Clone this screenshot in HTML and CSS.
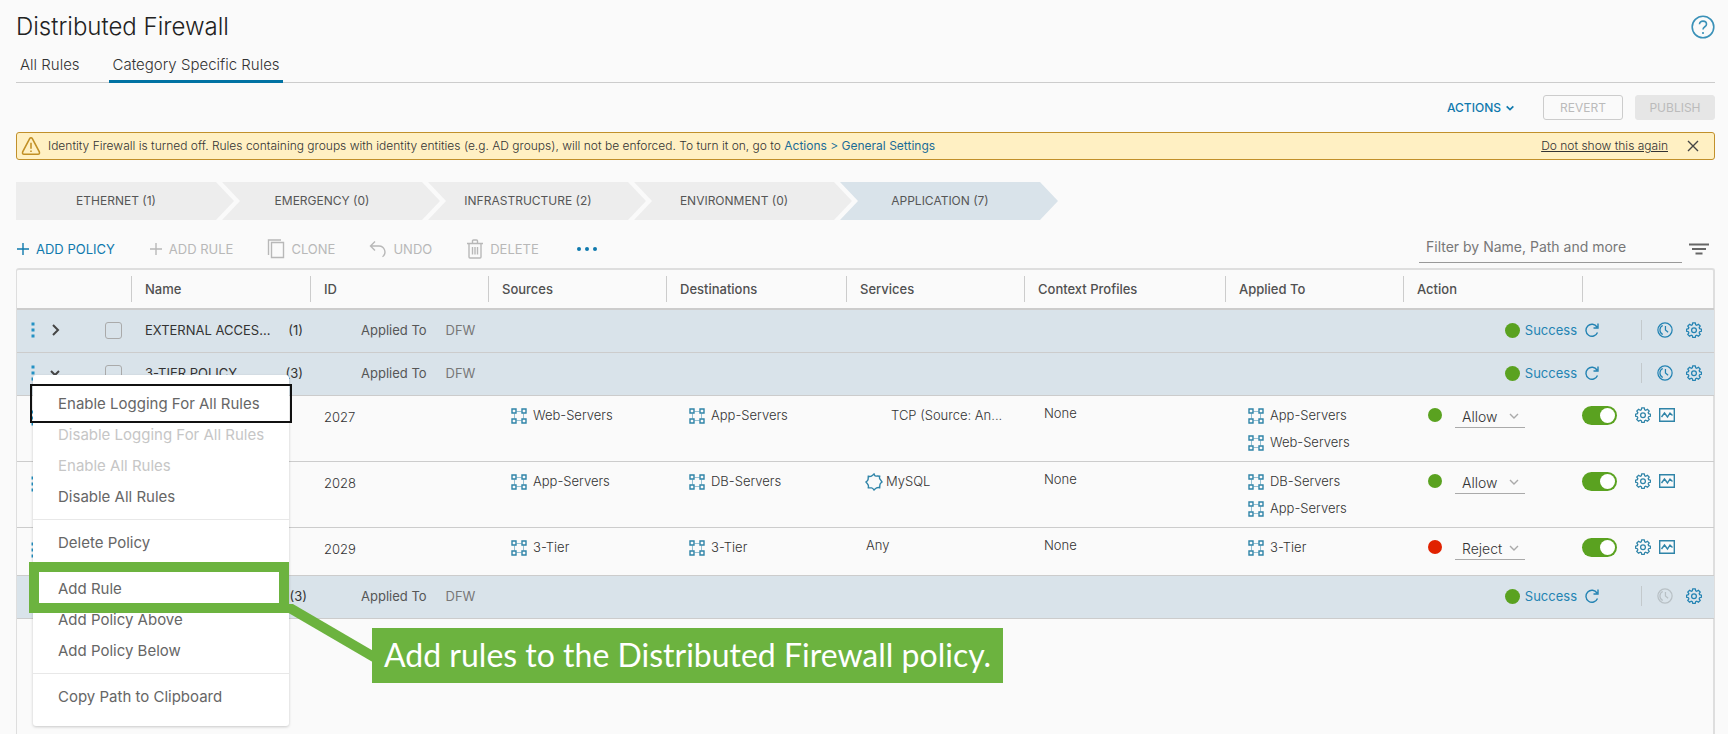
FILE: index.html
```html
<!DOCTYPE html>
<html lang="en">
<head>
<meta charset="utf-8">
<meta name="viewport" content="width=device-width, initial-scale=1">
<title>Distributed Firewall</title>
<link rel="stylesheet" href="styles.css">
</head>
<body>
<svg class="sprite" aria-hidden="true">
  <symbol id="plus" viewBox="0 0 14 14"><path d="M7 1v12M1 7h12"/></symbol>
  <symbol id="clone" viewBox="0 0 18 20"><path d="M4.5 3.5h12v15h-12z"/><path d="M1.5 16V1H14"/></symbol>
  <symbol id="undo" viewBox="0 0 18 18"><path d="M6 1.500L1.500 6 6 10.500M1.500 6H10a6 6 0 0 1 3.500 10.800"/></symbol>
  <symbol id="trash" viewBox="0 0 18 20"><path d="M1 4.500h16M3 4.500V18q0 1 1 1h10q1 0 1-1V4.500M6.500 4V2q0-1 1-1h3q1 0 1 1v2M6.500 8v7.500M9 8v7.500M11.500 8v7.500"/></symbol>
  <symbol id="down" viewBox="0 0 12 12"><path d="M2 4l4 4 4-4"/></symbol>
  <symbol id="right" viewBox="0 0 12 12"><path d="M4 1l5 5-5 5"/></symbol>
  <symbol id="close" viewBox="0 0 12 12"><path d="M1 1l10 10M11 1L1 11"/></symbol>
  <symbol id="kebab" viewBox="0 0 4 16"><path class="solid" d="M.5.500h3v3h-3zM.5 6.500h3v3h-3zM.5 12.500h3v3h-3z"/></symbol>
  <symbol id="group" viewBox="0 0 16 16"><path d="M1 1h4v4H1zM11 1h4v4h-4zM1 11h4v4H1zM11 11h4v4h-4z"/><path class="thin" d="M5.500 3.500h5M5.500 12.500h5M3.500 5.500v5M12.500 5.500v5"/></symbol>
  <symbol id="service" viewBox="0 0 18 18"><path d="M9 1q.8 2.400 2.200 2.100T14.700 3.300q-.5 1.900.2 2.700T17 9q-2 1.400-2.100 2.700t-.2 3q-1.900-.4-3.100.2T9 17q-1.200-2-2.400-2.100t-3.300-.2q.4-1.700-.2-2.800T1 9q2-1.400 2.100-2.600t.2-3.100q2 .4 3.100-.2T9 1z"/></symbol>
  <symbol id="refresh" viewBox="0 0 16 16"><path d="M13.500 10.500A6 6 0 1 1 13 5M14 1.500V6H9.500"/></symbol>
  <symbol id="clock" viewBox="0 0 18 18"><circle cx="9" cy="9" r="8"/><path d="M9.500 4.500V9l3 2.500M6.500 4a5.500 5.500 0 0 0 0 10"/></symbol>
  <symbol id="gear" viewBox="0 0 18 18"><path d="M7.600 1h2.800l.5 2.100 1.200.5 1.900-1.100 2 2-1.200 1.800.5 1.200 2.100.6v2.300l-2.100.5-.5 1.300 1.200 1.800-2 2-1.900-1.100-1.200.5-.5 2H7.600L7.100 15.400l-1.200-.5L4 16l-2-2 1.200-1.800-.5-1.300L.7 10.400V8.100l2-.6.5-1.200L2 4.500l2-2 1.900 1.100 1.200-.5z"/><circle cx="9" cy="9.200" r="2.700"/></symbol>
  <symbol id="chart" viewBox="0 0 16 14"><path d="M.7.700h14.600v12.600H.7zM2.500 9l3-4 3 4 2.500-4 2.500 2.500"/></symbol>
</svg>

<div class="page">
  <header class="head">
    <h1>Distributed Firewall</h1>
    <button class="icon-btn" aria-label="Help"><svg class="help" viewBox="0 0 24 24"><circle cx="12" cy="12" r="10.800"/><path d="M8.500 9.200c0-4.200 7-4 7 0 0 2.600-3.500 2.500-3.500 5.300M12 17v2"/></svg></button>
  </header>
  <nav class="tabs">
    <a class="tab" href="#all">All Rules</a>
    <a class="tab active" href="#category">Category Specific Rules</a>
  </nav>
  <div class="actions">
    <button class="link-btn">ACTIONS<svg class="i i10"><use href="#down"/></svg></button>
    <button class="btn" disabled>REVERT</button>
    <button class="btn filled" disabled>PUBLISH</button>
  </div>
  <div class="alert" role="alert">
    <svg class="warn" viewBox="0 0 18 18"><path d="M9 1.500q.8 0 1.200.8l6.300 12q.6 2.200-1.200 2.200H2.700q-1.800 0-1.200-2.200l6.300-12Q8.200 1.500 9 1.500zM9 6v5.500M9 13v1.500"/></svg>
    <p>Identity Firewall is turned off. Rules containing groups with identity entities (e.g. AD groups), will not be enforced. To turn it on, go to <a class="go" href="#settings">Actions &gt; General Settings</a></p>
    <a class="dismiss" href="#dismiss">Do not show this again</a>
    <button class="icon-btn" aria-label="Close"><svg class="i i12 dark"><use href="#close"/></svg></button>
  </div>
  <ol class="steps">
    <li class="step first">ETHERNET (1)</li>
    <li class="step">EMERGENCY (0)</li>
    <li class="step">INFRASTRUCTURE (2)</li>
    <li class="step">ENVIRONMENT (0)</li>
    <li class="step current">APPLICATION (7)</li>
  </ol>
  <div class="toolbar">
    <button class="tool primary"><svg class="i i14"><use href="#plus"/></svg>ADD POLICY</button>
    <button class="tool" disabled><svg class="i i14"><use href="#plus"/></svg>ADD RULE</button>
    <button class="tool" disabled><svg class="i i18x20"><use href="#clone"/></svg>CLONE</button>
    <button class="tool" disabled><svg class="i i18"><use href="#undo"/></svg>UNDO</button>
    <button class="tool" disabled><svg class="i i18x20"><use href="#trash"/></svg>DELETE</button>
    <button class="tool more" aria-label="More"><span></span><span></span><span></span></button>
    <div class="filter">
      <input type="text" aria-label="Filter" placeholder="Filter by Name, Path and more">
      <button class="icon-btn" aria-label="Filters"><svg class="lines" viewBox="0 0 22 12"><path d="M1 1.500h20M4 6h14M7.500 10.500h7"/></svg></button>
    </div>
  </div>

  <div class="grid">
    <table>
      <colgroup><col class="c114"><col class="c179"><col class="c178"><col class="c178"><col class="c180"><col class="c178"><col class="c201"><col class="c178"><col class="c179"><col class="c132"></colgroup>
      <thead>
        <tr><th></th><th><span>Name</span></th><th><span>ID</span></th><th><span>Sources</span></th><th><span>Destinations</span></th><th><span>Services</span></th><th><span>Context Profiles</span></th><th><span>Applied To</span></th><th><span>Action</span></th><th><span></span></th></tr>
      </thead>
      <tbody>
        <tr class="policy">
          <td><div class="lead"><svg class="i dots"><use href="#kebab"/></svg><svg class="i i12 dark bold"><use href="#right"/></svg><input type="checkbox" aria-label="Select External Access"></div></td>
          <td><div class="name"><span>EXTERNAL ACCES...</span><span>(1)</span></div></td>
          <td colspan="2"><div class="applied"><span>Applied To</span><span class="dfw">DFW</span></div></td>
          <td colspan="6"><div class="state"><i class="dot big"></i><a href="#status">Success</a><svg class="i i16"><use href="#refresh"/></svg><i class="bar"></i><svg class="i i16"><use href="#clock"/></svg><svg class="i i16"><use href="#gear"/></svg></div></td>
        </tr>
        <tr class="policy">
          <td><div class="lead"><svg class="i dots"><use href="#kebab"/></svg><svg class="i i12 dark bold"><use href="#down"/></svg><input type="checkbox" aria-label="Select 3-Tier Policy"></div></td>
          <td><div class="name"><span>3-TIER POLICY</span><span>(3)</span></div></td>
          <td colspan="2"><div class="applied"><span>Applied To</span><span class="dfw">DFW</span></div></td>
          <td colspan="6"><div class="state"><i class="dot big"></i><a href="#status">Success</a><svg class="i i16"><use href="#refresh"/></svg><i class="bar"></i><svg class="i i16"><use href="#clock"/></svg><svg class="i i16"><use href="#gear"/></svg></div></td>
        </tr>
        <tr class="rule">
          <td><div class="lead"><svg class="i dots"><use href="#kebab"/></svg></div></td><td></td>
          <td class="id">2027</td>
          <td class="ent"><div><svg class="i i16"><use href="#group"/></svg>Web-Servers</div></td>
          <td class="ent"><div><svg class="i i16"><use href="#group"/></svg>App-Servers</div></td>
          <td class="tcp">TCP (Source: An...</td>
          <td class="plain">None</td>
          <td class="ent"><div><svg class="i i16"><use href="#group"/></svg>App-Servers</div><div><svg class="i i16"><use href="#group"/></svg>Web-Servers</div></td>
          <td><div class="act"><i class="dot"></i><span class="pick"><select aria-label="Action for 2027"><option>Allow</option><option>Reject</option></select><svg class="i i12"><use href="#down"/></svg></span></div></td>
          <td><div class="ctl"><input class="toggle" type="checkbox" checked aria-label="Enable 2027"><svg class="i i16"><use href="#gear"/></svg><svg class="i i16x14"><use href="#chart"/></svg></div></td>
        </tr>
        <tr class="rule">
          <td><div class="lead"><svg class="i dots"><use href="#kebab"/></svg></div></td><td></td>
          <td class="id">2028</td>
          <td class="ent"><div><svg class="i i16"><use href="#group"/></svg>App-Servers</div></td>
          <td class="ent"><div><svg class="i i16"><use href="#group"/></svg>DB-Servers</div></td>
          <td class="svc"><div><svg class="i i18"><use href="#service"/></svg>MySQL</div></td>
          <td class="plain">None</td>
          <td class="ent"><div><svg class="i i16"><use href="#group"/></svg>DB-Servers</div><div><svg class="i i16"><use href="#group"/></svg>App-Servers</div></td>
          <td><div class="act"><i class="dot"></i><span class="pick"><select aria-label="Action for 2028"><option>Allow</option><option>Reject</option></select><svg class="i i12"><use href="#down"/></svg></span></div></td>
          <td><div class="ctl"><input class="toggle" type="checkbox" checked aria-label="Enable 2028"><svg class="i i16"><use href="#gear"/></svg><svg class="i i16x14"><use href="#chart"/></svg></div></td>
        </tr>
        <tr class="rule short">
          <td><div class="lead"><svg class="i dots"><use href="#kebab"/></svg></div></td><td></td>
          <td class="id">2029</td>
          <td class="ent"><div><svg class="i i16"><use href="#group"/></svg>3-Tier</div></td>
          <td class="ent"><div><svg class="i i16"><use href="#group"/></svg>3-Tier</div></td>
          <td class="plain">Any</td>
          <td class="plain">None</td>
          <td class="ent"><div><svg class="i i16"><use href="#group"/></svg>3-Tier</div></td>
          <td><div class="act"><i class="dot red"></i><span class="pick"><select aria-label="Action for 2029"><option>Reject</option><option>Allow</option></select><svg class="i i12"><use href="#down"/></svg></span></div></td>
          <td><div class="ctl"><input class="toggle" type="checkbox" checked aria-label="Enable 2029"><svg class="i i16"><use href="#gear"/></svg><svg class="i i16x14"><use href="#chart"/></svg></div></td>
        </tr>
        <tr class="policy">
          <td></td>
          <td><div class="name wide"><span></span><span>(3)</span></div></td>
          <td colspan="2"><div class="applied"><span>Applied To</span><span class="dfw">DFW</span></div></td>
          <td colspan="6"><div class="state"><i class="dot big"></i><a href="#status">Success</a><svg class="i i16"><use href="#refresh"/></svg><i class="bar"></i><svg class="i i16 off"><use href="#clock"/></svg><svg class="i i16"><use href="#gear"/></svg></div></td>
        </tr>
      </tbody>
    </table>

    <div class="menu" role="menu">
      <button class="item focused" role="menuitem">Enable Logging For All Rules</button>
      <button class="item" role="menuitem" disabled>Disable Logging For All Rules</button>
      <button class="item" role="menuitem" disabled>Enable All Rules</button>
      <button class="item" role="menuitem">Disable All Rules</button>
      <hr>
      <button class="item" role="menuitem">Delete Policy</button>
      <hr>
      <button class="item marked" role="menuitem">Add Rule</button>
      <button class="item" role="menuitem">Add Policy Above</button>
      <button class="item" role="menuitem">Add Policy Below</button>
      <hr>
      <button class="item" role="menuitem">Copy Path to Clipboard</button>
      <svg class="leader" viewBox="0 0 96 64"><path d="M0 0L96 56"/></svg>
      <div class="callout">Add rules to the Distributed Firewall policy.</div>
    </div>
  </div>
</div>
</body>
</html>
```
FILE: styles.css
```css
* { box-sizing: border-box; }
body { margin: 0; background: #fafafa; color: #565656; font: 14px/20px Inter, "Open Sans", sans-serif; }
button, input, select { font: inherit; color: inherit; background: none; border: 0; padding: 0; margin: 0; }
a { color: inherit; text-decoration: none; }
.sprite { position: absolute; width: 0; height: 0; }
.page { display: flex; flex-direction: column; min-height: 100vh; padding: 9px 13px 0 16px; }

.i, .help, .warn, .lines { flex: none; fill: none; stroke: currentColor; stroke-width: 1.4; }
.thin { stroke-width: 1; opacity: .5; }
.solid { fill: currentColor; stroke: none; }
.i10 { width: 10px; height: 10px; stroke-width: 2; }
.i12 { width: 12px; height: 12px; }
.i14 { width: 14px; height: 14px; }
.i16 { width: 16px; height: 16px; }
.i18 { width: 18px; height: 18px; }
.i18x20 { width: 18px; height: 20px; }
.i16x14 { width: 16px; height: 14px; }
.dark { color: #454545; }
.bold { stroke-width: 2; }
.off { color: #b8c0c5; }

.head { display: flex; justify-content: space-between; align-items: center; height: 36px; }
.head h1 { margin: 0; font-size: 24px; font-weight: 300; line-height: 36px; color: #222; }
.icon-btn { display: flex; align-items: center; }
.help { width: 24px; height: 24px; color: #3a91b8; stroke-width: 1.6; }

.tabs { display: flex; gap: 26px; height: 38px; border-bottom: 1px solid #ccc; }
.tab { padding: 9px 3px 0 4px; height: 38px; font-size: 15px; font-weight: 300; line-height: 22px; color: #333; }
.tab.active { border-bottom: 3px solid #0072a3; }

.actions { display: flex; justify-content: flex-end; align-items: center; gap: 12px; padding-top: 12px; }
.btn { width: 80px; height: 25px; border: 1px solid #ccc; border-radius: 3px; font-size: 12px; color: #bbb; }
.btn.filled { background: #e6e6e6; border-color: #e6e6e6; }
.link-btn { display: flex; align-items: center; gap: 4px; margin-right: 16px; font-size: 12px; font-weight: 500; color: #0f79ad; }

.alert { display: flex; align-items: center; height: 28px; margin-top: 12px; padding: 0 15px 0 4px; border: 1px solid #c1902b; border-radius: 3px; background: #fff0c3; font-size: 12px; font-weight: 300; color: #333; }
.warn { width: 20px; height: 20px; color: #c18f25; }
.alert p { flex: 1; margin: 0 0 0 7px; }
.go { color: #1a6c98; font-weight: 400; }
.dismiss { margin-right: 19px; text-decoration: underline; }

.steps { display: flex; margin: 22px 0 0; padding: 0; list-style: none; }
.step { width: 218px; margin-right: -12px; padding-right: 18px; line-height: 38px; text-align: center; font-size: 12px; background: #ededed; clip-path: polygon(0 0, 200px 0, 100% 50%, 200px 100%, 0 100%, 18px 50%); }
.step.first { clip-path: polygon(0 0, 200px 0, 100% 50%, 200px 100%, 0 100%); }
.step.current { background: #d9e3ea; }

.toolbar { display: flex; align-items: center; gap: 34px; height: 48px; padding-top: 10px; }
.tool { display: flex; align-items: center; gap: 6px; font-size: 13px; color: #b8b8b8; }
.tool.primary { color: #0f79ad; }
.more { gap: 4px; margin-left: 4px; }
.more span { width: 4px; height: 4px; border-radius: 50%; background: #0f79ad; }
.filter { display: flex; align-items: center; gap: 6px; margin-left: auto; padding-right: 5px; }
.filter input { width: 263px; height: 28px; padding: 0 7px 4px; border-bottom: 1px solid #999; font-size: 14px; }
.filter input::placeholder { color: #777; opacity: 1; }
.lines { width: 22px; height: 12px; color: #666; stroke-width: 2; }

.grid { position: relative; flex: 1; border: solid #dedede; border-width: 2px 2px 0 1px; border-radius: 3px 3px 0 0; }
table { width: 100%; table-layout: fixed; border-collapse: collapse; }
.c114 { width: 114px; } .c132 { width: 132px; } .c178 { width: 178px; } .c179 { width: 179px; } .c180 { width: 180px; } .c201 { width: 201px; }
th { height: 39px; padding: 0; text-align: left; font-size: 13px; font-weight: 500; color: #505050; border-bottom: 2px solid #ccc; }
th span { display: block; height: 26px; padding-left: 13px; line-height: 26px; border-left: 1px solid #ccc; }
td { padding: 0; white-space: nowrap; vertical-align: top; }
tr { border-bottom: 1px solid #ccc; }

.policy { background: #d9e3ea; font-size: 13px; }
.policy td > div { display: flex; align-items: center; height: 42px; padding-bottom: 2px; }
.lead { padding-left: 14px; gap: 14px; }
.lead input { appearance: none; width: 17px; height: 17px; margin-left: 30px; border: 1px solid #aaa; border-radius: 3px; }
.dots { width: 4px; height: 16px; color: #2492c4; }
.name { justify-content: space-between; padding: 0 7px 0 14px; color: #333; }
.name.wide { padding-right: 3px; }
.applied { gap: 19px; padding-left: 51px; }
.dfw { color: #777; }
.state { justify-content: flex-end; padding-right: 12px; color: #2383b3; }
.state a { margin: 0 7px 0 5px; }
.dot { width: 14px; height: 14px; border-radius: 50%; background: #5aa220; }
.dot.big { width: 15px; height: 15px; }
.dot.red { background: #e12200; }
.bar { width: 1px; height: 20px; margin: 0 15px 0 41px; background: #c3c9cc; }
.state .bar + .i { margin-right: 13px; }

.rule { height: 66px; }
.rule.short { height: 48px; }
.rule td { padding-top: 6px; font-size: 13px; font-weight: 300; line-height: 27px; color: #333; }
.rule .lead { padding-top: 6px; }
.rule .id { padding: 8px 0 0 14px; }
.ent div, .svc div { display: flex; align-items: center; gap: 6px; height: 27px; }
.ent .i, .svc .i, .ctl .i { color: #2f84a8; }
.ent { padding-left: 23px; }
.svc { padding-left: 19px; }
.svc div { gap: 3px; }
.rule .tcp { padding-left: 45px; }
.rule .plain { padding: 4px 0 0 20px; }
.act, .ctl { display: flex; align-items: center; height: 26px; }
.act { padding-left: 25px; gap: 13px; }
.pick { display: grid; align-items: center; width: 70px; height: 25px; border-bottom: 1px solid #aaa; }
.pick select { grid-area: 1 / 1; appearance: none; padding-left: 7px; font-size: 14px; }
.pick .i { grid-area: 1 / 1; justify-self: end; margin-right: 5px; color: #aaa; pointer-events: none; }
.toggle { appearance: none; display: flex; justify-content: flex-end; width: 35px; height: 19px; margin-right: 18px; padding: 2px; border-radius: 10px; background: #5aa220; }
.toggle::before { content: ""; width: 15px; height: 15px; border-radius: 50%; background: #fff; }
.ctl .i { margin-right: 8px; }

.menu { position: absolute; top: 105px; left: 16px; width: 256px; padding: 13px 0 14px; background: #fff; border-radius: 3px; box-shadow: 0 1px 3px #0003; }
.menu hr { height: 1px; margin: 7px 0; border: 0; background: #e8e8e8; }
.item { display: block; width: 100%; height: 31px; padding-left: 25px; text-align: left; font-size: 15px; color: #666; }
.item:disabled { color: #c6c6c6; }
.focused, .marked { position: relative; }
.focused::after { content: ""; position: absolute; inset: -4px -3px; border: 2px solid #111; }
.marked::after { content: ""; position: absolute; z-index: 2; inset: -11px 0 -9px -4px; border: 10px solid #6cb33f; }
.leader { position: absolute; z-index: 1; top: 229px; left: 250px; width: 96px; height: 64px; stroke: #6cb33f; stroke-width: 10; }
.callout { position: absolute; z-index: 2; top: 253px; left: 339px; padding: 0 12px 2px; line-height: 53px; font-family: Lato, sans-serif; font-size: 32px; white-space: nowrap; color: #fff; background: #6cb33f; }
```
